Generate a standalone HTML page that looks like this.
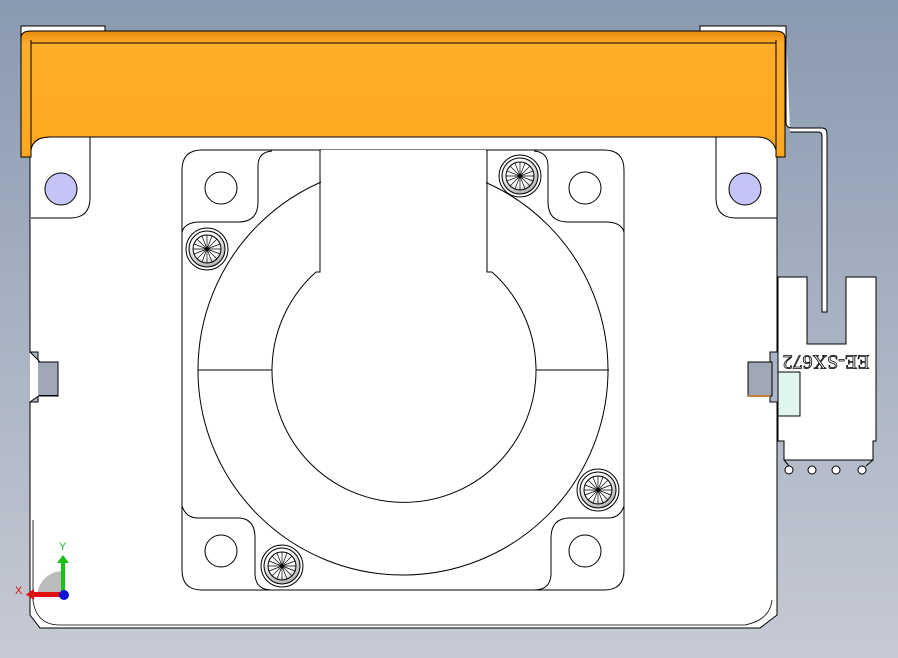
<!DOCTYPE html>
<html><head><style>
html,body{margin:0;padding:0;width:898px;height:658px;overflow:hidden}
body{background:linear-gradient(#8a9ab0,#c6cad4)}
svg{position:absolute;left:0;top:0}
</style></head><body>
<svg width="898" height="658" viewBox="0 0 898 658" fill="none" stroke="#000" stroke-width="1">
<defs>
<linearGradient id="og" x1="0" y1="0" x2="0" y2="1"><stop offset="0" stop-color="#e88a10"/><stop offset="0.1" stop-color="#ffad2a"/><stop offset="1" stop-color="#ffa820"/></linearGradient>
<radialGradient id="sg" cx="0.45" cy="0.4" r="0.6"><stop offset="0.6" stop-color="#fff"/><stop offset="1" stop-color="#aaa"/></radialGradient>
</defs>
<rect x="21" y="26" width="84" height="12" fill="#fff" stroke="#000"/>
<rect x="700" y="26" width="86" height="12" fill="#fff" stroke="#000"/>
<path d="M786 27 V122 Q786 128 792 128 H822 Q827 128 827 134 V312 H822 V136 Q822 132 818 132 H790" stroke="#000" fill="#fff"/>
<path d="M30 156 Q30 137 50 137 H757 Q777 137 777 156 V352 H770 V402 H777 V615 L760 628 H40 L30 615 V402 H38 V352 H30 Z" fill="#fff"/>
<path d="M33 520 V600 Q36 625 60 625 H745 Q770 620 772 600" stroke-width="0.8"/>
<path d="M30 352 L40 362 H58 V395 H40 L30 402" fill="#fff"/>
<rect x="38" y="362" width="20" height="33" fill="#a0a8b8" stroke="none"/>
<path d="M38 362 H58 V396 H38" />
<rect x="748" y="362" width="24" height="34" fill="#a0a8b8" stroke="#000"/>
<path d="M748 396 H770" stroke="#c88040" stroke-width="2"/>
<path d="M31 218 H70 Q90 218 90 198 V137" />
<path d="M777 218 H736 Q716 218 716 198 V137" />
<circle cx="61" cy="189" r="16" fill="#c4c4f6"/>
<circle cx="745" cy="189" r="16" fill="#c4c4f6"/>
<path d="M21 38 Q21 31 31 31 H775 Q785 31 785 38 V157 H776 V150 Q772 137 757 137 H50 Q33 137 31 150 V157 H21 Z" fill="url(#og)"/>
<path d="M31 43 H776 M31 40 V157 M776 40 V157"/>
<!-- inner plate -->
<path d="M202 150 H604 Q624 150 624 170 V570 Q624 590 604 590 H202 Q182 590 182 570 V170 Q182 150 202 150 Z" fill="#fff"/>
<path d="M182 232 Q185 222 200 222 H238 Q258 222 258 202 V166 Q258 152 272 151"/>
<path d="M624 232 Q621 222 606 222 H568 Q548 222 548 202 V166 Q548 152 534 151"/>
<path d="M182 506 Q186 518 198 518 H238 Q255 518 255 538 V575 Q256 590 272 590"/>
<path d="M624 506 Q620 518 608 518 H570 Q551 518 551 538 V575 Q550 590 534 590"/>
<circle cx="403" cy="370" r="205" fill="#fff"/>
<rect x="321" y="150" width="165" height="122" fill="#fff" stroke="none"/>
<path d="M320 150 V272 H316 M487 150 V272 H492"/>
<path d="M316 272 A132 132 0 1 0 492 272"/>
<path d="M198 370 H272 M536 370 H609"/>
<circle cx="221" cy="188" r="16"/><circle cx="585" cy="188" r="16"/>
<circle cx="221" cy="551" r="16"/><circle cx="585" cy="551" r="16"/>
<g>
<g transform="translate(520,176)"><circle r="21"/><circle r="18" fill="url(#sg)"/><circle r="14"/><path d="M-14 0H14M0-14V14M-10-10L10 10M-10 10L10-10M-5-13L5 13M5-13L-5 13M-13-5L13 5M-13 5L13-5" stroke-width="0.7"/></g>
<g transform="translate(207,249)"><circle r="21"/><circle r="18" fill="url(#sg)"/><circle r="14"/><path d="M-14 0H14M0-14V14M-10-10L10 10M-10 10L10-10M-5-13L5 13M5-13L-5 13M-13-5L13 5M-13 5L13-5" stroke-width="0.7"/></g>
<g transform="translate(598,490)"><circle r="21"/><circle r="18" fill="url(#sg)"/><circle r="14"/><path d="M-14 0H14M0-14V14M-10-10L10 10M-10 10L10-10M-5-13L5 13M5-13L-5 13M-13-5L13 5M-13 5L13-5" stroke-width="0.7"/></g>
<g transform="translate(282,566)"><circle r="21"/><circle r="18" fill="url(#sg)"/><circle r="14"/><path d="M-14 0H14M0-14V14M-10-10L10 10M-10 10L10-10M-5-13L5 13M5-13L-5 13M-13-5L13 5M-13 5L13-5" stroke-width="0.7"/></g>
</g>
<path d="M778 277 H807 V344 H846 V277 H876 V441 H873 V460 H784 V441 H778 Z" fill="#fff"/>
<rect x="778" y="372" width="22" height="44" fill="#e0f4f0" stroke="#000"/>
<g fill="#fff"><circle cx="789" cy="470" r="4"/><circle cx="812" cy="470" r="4"/><circle cx="836" cy="470" r="4"/><circle cx="862" cy="470" r="4"/></g>
<path d="M784 460 L789 466 M873 460 L866 466" />
<text x="826" y="360" transform="rotate(180 826 360)" text-anchor="middle" dominant-baseline="middle" font-family="Liberation Serif, serif" font-size="20" fill="#fff" stroke="#000" stroke-width="0.8">EE-SX672</text>
<path d="M37 597 A26 26 0 0 1 63 571 V597 Z" fill="#bbb" stroke="none"/>
<rect x="61" y="561" width="4" height="36" fill="#18c018" stroke="none"/>
<path d="M57 563 L63 555 L69 563 Z" fill="#18c018" stroke="none"/>
<rect x="33" y="592" width="30" height="5" fill="#e01010" stroke="none"/>
<path d="M34 589 L26 594.5 L34 600 Z" fill="#e01010" stroke="none"/>
<circle cx="64" cy="595" r="5" fill="#1010d0" stroke="none"/>
<text x="59" y="550" font-family="Liberation Sans,sans-serif" font-size="11" fill="#20b020" stroke="none">Y</text>
<text x="15" y="594" font-family="Liberation Sans,sans-serif" font-size="11" fill="#e01010" stroke="none">X</text>
</svg>
</body></html>
